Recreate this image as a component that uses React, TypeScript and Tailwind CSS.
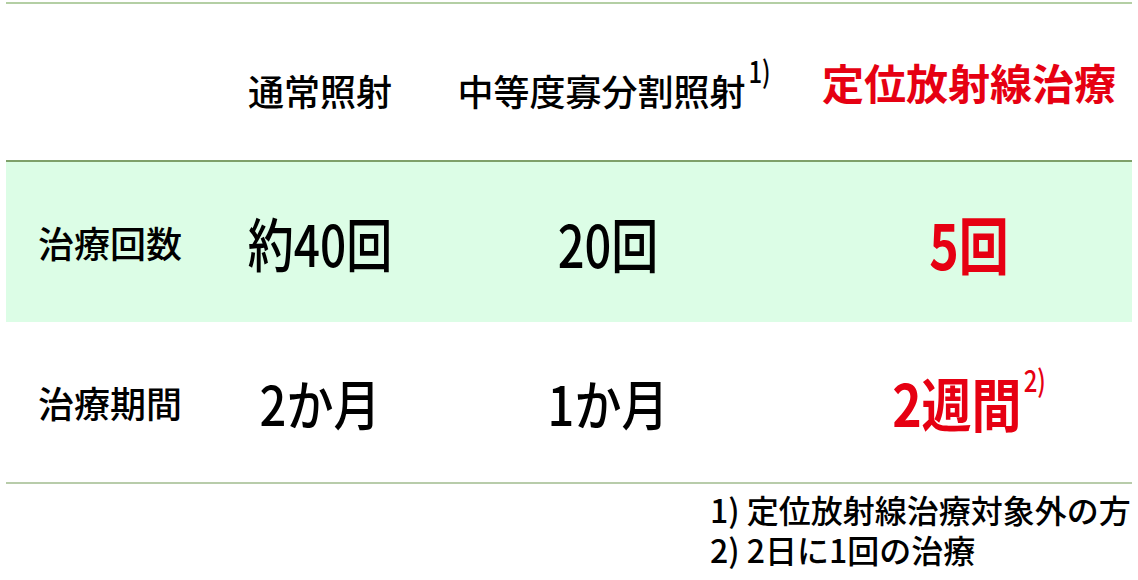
export default function App() {
  const font = { fontFamily: '"Noto Sans CJK JP", "Noto Sans", sans-serif' };

  return (
    <div className="w-[1138px] h-[580px] bg-white overflow-hidden" style={font}>
      <div className="mx-[6px] pt-[2px]">
        {/* header row */}
        <div className="grid grid-cols-[224px_180px_396px_1fr] h-[160px] border-t-2 border-[#b4cfa4] border-b-2 border-b-[#7fa06a] items-center">
          <div />
          <div className="text-center pt-[16px] text-[36px] font-medium text-black leading-none">
            通常照射
          </div>
          <div className="text-center pt-[16px] pl-[12px] text-[36px] font-medium text-black leading-none">
            中等度寡分割照射
            <span className="relative -top-[26px] text-[24px] ml-[3px] inline-block scale-y-125">1)</span>
          </div>
          <div className="text-center pt-0 text-[42px] font-bold text-[#e60012] leading-none">
            定位放射線治療
          </div>
        </div>

        {/* count row */}
        <div className="grid grid-cols-[224px_180px_396px_1fr] h-[160px] bg-[#dcfde6] items-center">
          <div className="pl-[32px] text-[36px] font-medium text-black leading-none">治療回数</div>
          <div className="text-center text-[46px] font-medium text-black leading-none">
            <span className="inline-block scale-y-125">約40回</span>
          </div>
          <div className="text-center text-[47px] font-medium text-black leading-none">
            <span className="inline-block scale-y-125">20回</span>
          </div>
          <div className="text-center text-[50px] font-bold text-[#e60012] leading-none">
            <span className="inline-block scale-y-125">5回</span>
          </div>
        </div>

        {/* period row */}
        <div className="grid grid-cols-[224px_180px_396px_1fr] h-[162px] border-b-2 border-[#b8ccaa] items-center">
          <div className="pl-[32px] text-[36px] font-medium text-black leading-none">治療期間</div>
          <div className="text-center text-[47px] font-medium text-black leading-none">
            <span className="inline-block scale-y-[1.15]">2か月</span>
          </div>
          <div className="text-center text-[47px] font-medium text-black leading-none">
            <span className="inline-block scale-y-[1.15]">1か月</span>
          </div>
          <div className="text-center text-[50px] font-bold text-[#e60012] leading-none">
            <span className="inline-block scale-y-[1.15]">2週間</span>
            <span className="relative -top-[35px] text-[24px] ml-[2px] font-medium inline-block scale-y-125">2)</span>
          </div>
        </div>

        {/* notes */}
        <div className="pl-[704px] pt-[5px] text-[32px] font-medium text-black leading-[40px]">
          <div>1) 定位放射線治療対象外の方</div>
          <div>2) 2日に1回の治療</div>
        </div>
      </div>
    </div>
  );
}
